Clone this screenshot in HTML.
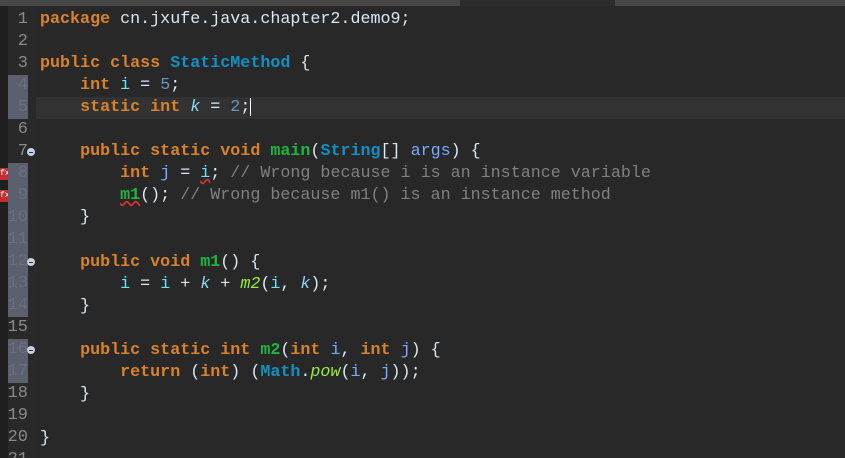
<!DOCTYPE html>
<html><head><meta charset="utf-8"><style>
html,body{margin:0;padding:0;width:845px;height:458px;overflow:hidden;}
body{background:#282828;position:relative;font-family:"Liberation Mono",monospace;font-size:16.7px;}
.top{position:absolute;left:0;top:0;width:845px;height:6px;background:#474747;}
.tab{position:absolute;top:0;left:460px;width:155px;height:6px;background:#2c2c2c;}
.ls{position:absolute;left:0;top:6px;width:8px;height:452px;background:#1f1f1f;}
.gut{position:absolute;left:8px;top:6px;width:28px;height:452px;background:#292929;}
.band{position:absolute;left:8px;width:20px;background:#5c5f6e;}
.cur{position:absolute;left:36px;top:97px;width:809px;height:22px;background:#323232;}
.ln{position:absolute;left:0;width:28px;text-align:right;color:#8a8a8a;height:22px;line-height:22px;font-size:17px;}
.code{position:absolute;left:40px;top:9px;color:#d9e8f7;white-space:pre;line-height:22.05px;}
.k{color:#d9822b;font-weight:bold}
.c{color:#1290c3;font-weight:bold}
.f{color:#66e1f8}
.fi{color:#8dd8f8;font-style:italic}
.n{color:#6897bb}
.m{color:#1eb540;font-weight:bold}
.mi{color:#96ec3f;font-style:italic}
.p{color:#79abff}
.cm{color:#808080}
.err{text-decoration:underline wavy #e03030;}
.fold{position:absolute;left:27px;width:8px;height:8px;border-radius:50%;background:#c8d0e0;}
.fold:after{content:"";position:absolute;left:2px;top:3.5px;width:4px;height:1px;background:#333;}
.x{position:absolute;left:0;width:8px;height:12px;background:#c03030;color:#fff;font-size:8px;line-height:12px;overflow:hidden;}
.caret{display:inline-block;width:1px;height:18px;background:#fff;vertical-align:middle;}
</style></head><body>
<div class="top"><div class="tab"></div></div>
<div class="ls"></div>
<div class="gut"></div>
<div class="band" style="top:75px;height:44px"></div>
<div class="band" style="top:163px;height:154px"></div>
<div class="band" style="top:339px;height:44px"></div>
<div class="x" style="top:168px">fx</div>
<div class="x" style="top:190px">fx</div>
<div class="cur"></div>
<div class="ln" style="top:9px">1</div>
<div class="ln" style="top:31px">2</div>
<div class="ln" style="top:53px">3</div>
<div class="ln" style="top:75px;color:#6a6e80">4</div>
<div class="ln" style="top:97px;color:#6a6e80">5</div>
<div class="ln" style="top:119px">6</div>
<div class="ln" style="top:141px">7</div>
<div class="ln" style="top:163px;color:#6a6e80">8</div>
<div class="ln" style="top:185px;color:#6a6e80">9</div>
<div class="ln" style="top:207px;color:#6a6e80">10</div>
<div class="ln" style="top:229px;color:#6a6e80">11</div>
<div class="ln" style="top:251px;color:#6a6e80">12</div>
<div class="ln" style="top:273px;color:#6a6e80">13</div>
<div class="ln" style="top:295px;color:#6a6e80">14</div>
<div class="ln" style="top:317px">15</div>
<div class="ln" style="top:339px;color:#6a6e80">16</div>
<div class="ln" style="top:361px;color:#6a6e80">17</div>
<div class="ln" style="top:383px">18</div>
<div class="ln" style="top:405px">19</div>
<div class="ln" style="top:427px">20</div>
<div class="ln" style="top:449px">21</div>
<div class="fold" style="top:148px"></div>
<div class="fold" style="top:258px"></div>
<div class="fold" style="top:346px"></div>
<div class="code"><span class="k">package</span> cn.jxufe.java.chapter2.demo9;

<span class="k">public</span> <span class="k">class</span> <span class="c">StaticMethod</span> {
    <span class="k">int</span> <span class="f">i</span> = <span class="n">5</span>;
    <span class="k">static</span> <span class="k">int</span> <span class="fi">k</span> = <span class="n">2</span>;<span class="caret"></span>

    <span class="k">public</span> <span class="k">static</span> <span class="k">void</span> <span class="m">main</span>(<span class="c">String</span>[] <span class="p">args</span>) {
        <span class="k">int</span> <span class="p">j</span> = <span class="f err">i</span>; <span class="cm">// Wrong because i is an instance variable</span>
        <span class="m err">m1</span>(); <span class="cm">// Wrong because m1() is an instance method</span>
    }

    <span class="k">public</span> <span class="k">void</span> <span class="m">m1</span>() {
        <span class="f">i</span> = <span class="f">i</span> + <span class="fi">k</span> + <span class="mi">m2</span>(<span class="f">i</span>, <span class="fi">k</span>);
    }

    <span class="k">public</span> <span class="k">static</span> <span class="k">int</span> <span class="m">m2</span>(<span class="k">int</span> <span class="p">i</span>, <span class="k">int</span> <span class="p">j</span>) {
        <span class="k">return</span> (<span class="k">int</span>) (<span class="c">Math</span>.<span class="mi">pow</span>(<span class="p">i</span>, <span class="p">j</span>));
    }

}
</div>
</body></html>
